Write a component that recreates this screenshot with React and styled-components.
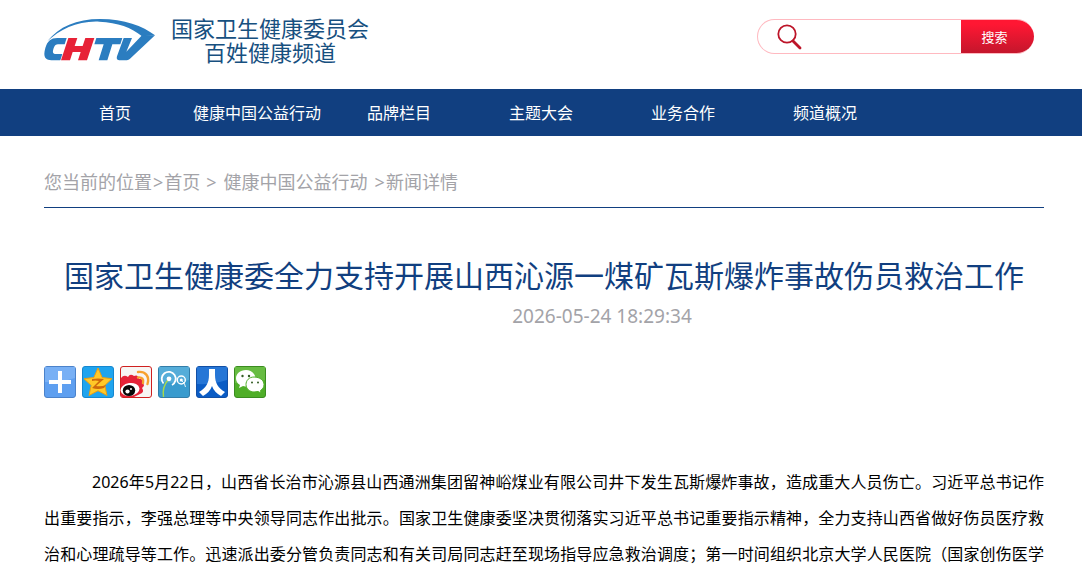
import React from "react";
import styled, { createGlobalStyle } from "styled-components";

const GlobalStyle = createGlobalStyle`
  body {
    margin: 0;
    background: #fff;
    color: #000;
    font-family: "Noto Sans", "Noto Sans CJK SC", sans-serif;
    font-size: 16px;
    text-spacing-trim: space-all;
  }

  a {
    color: inherit;
    text-decoration: none;
  }
`;

// Shared page gutters
const Wrap = styled.div`
  padding: 0 38px 0 44px;
`;

const Header = styled.header`
  display: flex;
  justify-content: space-between;
  align-items: flex-start;
  height: 73px;
  padding: 16px 48px 0 44px;
`;

const Brand = styled.a`
  display: flex;
  align-items: center;
  gap: 16px;
  color: #17507f;
`;

const BrandName = styled.span`
  display: flex;
  flex-direction: column;
  font-size: 22px;
  line-height: 24px;
  text-align: center;
`;

const SearchForm = styled.form`
  display: flex;
  align-items: center;
  box-sizing: border-box;
  width: 277px;
  height: 35px;
  margin-top: 3px;
  padding-left: 19px;
  border: 1px solid #ffb9c0;
  border-right: 0;
  border-radius: 18px;
  overflow: hidden;
`;

const SearchInput = styled.input`
  flex: 1;
  min-width: 0;
  height: 30px;
  padding: 0 8px;
  border: 0;
  outline: 0;
  background: transparent;
  font: inherit;
`;

const SearchButton = styled.button`
  width: 73px;
  height: 35px;
  padding: 0 6px 0 0;
  border: 0;
  background: linear-gradient(#ff1733 15%, #c2162c);
  color: #fff;
  font-family: inherit;
  font-size: 13px;
  cursor: pointer;
`;

const Nav = styled.nav`
  background: #113f80;
`;

const NavList = styled.ul`
  display: flex;
  margin: 0;
  padding: 1px 38px 0 44px;
  list-style: none;
`;

const NavItem = styled.li`
  width: 142px;
  color: #fff;
  line-height: 46px;
  text-align: center;
  white-space: nowrap;
`;

const Crumbs = styled.nav`
  display: flex;
  padding: 28px 0 7px;
  border-bottom: 1px solid #113f80;
  color: #a3a3a8;
  font-size: 18px;
  line-height: 36px;
`;

const Separator = styled.span`
  padding: 0 1px 0 ${(props) => (props.$wide ? 6 : 1)}px;
`;

const Title = styled.h1`
  margin: 48px 0 0;
  color: #113f80;
  font-size: 30px;
  font-weight: 400;
  line-height: 40px;
  text-align: center;
`;

const PublishTime = styled.time`
  display: block;
  padding-left: 116px;
  color: #a3a3a8;
  font-size: 19px;
  line-height: 40px;
  text-align: center;
`;

const ShareBar = styled.div`
  display: flex;
  gap: 6px;
  margin: 30px 0 66px;
`;

const ShareButton = styled.button`
  width: 32px;
  height: 32px;
  padding: 0;
  border: 0;
  background: none;
  cursor: pointer;

  svg {
    display: block;
  }
`;

const Paragraph = styled.p`
  margin: 0;
  line-height: 36px;
  text-align: justify;
  text-align-last: justify;
  text-indent: 48px;
`;

const LogoMark = () => (
  <svg width="111" height="44" viewBox="24 24 333 132" aria-hidden="true">
    <g fill="#2b7dc0">
      <path d="M34 94C68 50 122 27 192 27C266 27 320 48 357 76L318 79C286 52 246 38 190 35C126 32 72 58 34 94Z" />
      <path d="M92 84H64C44 84 34 94 28 114C21 138 26 151 46 151H73L79 132H61C51 132 49 128 52 118C55 107 59 103 69 103H86Z" />
      <path d="M181 84H259L253 103H229L214 151H188L203 103H175Z" />
      <path d="M263 84H288L271 125L318 76H357L282 146C278 150 274 151 268 151H253C243 151 241 147 243 139Z" />
    </g>
    <path fill="#e72237" d="M97 84H124L116 108H140L148 84H175L153 151H126L134 126H110L102 151H75Z" />
  </svg>
);

const SearchIcon = () => (
  <svg width="26" height="26" viewBox="0 0 26 26" fill="none" stroke="#bd1529" aria-hidden="true">
    <circle cx="10" cy="10" r="8.7" strokeWidth="1.8" />
    <path d="M16 17L23 24" strokeWidth="2.8" strokeLinecap="round" />
  </svg>
);

const Tile = ({ fill, stroke, children }) => (
  <svg width="32" height="32" viewBox="0 0 32 32" aria-hidden="true">
    <rect x=".5" y=".5" width="31" height="31" rx="2.5" fill={fill} stroke={stroke} />
    {children}
  </svg>
);

const shares = [
  {
    label: "分享",
    icon: (
      <Tile fill="#5e9ff0" stroke="#4b82ca">
        <path d="M1 1H31V12Q16 17 1 16Z" fill="#78b0f5" />
        <path d="M14 5h4v9h9v4h-9v9h-4v-9H5v-4h9Z" fill="#fff" />
      </Tile>
    ),
  },
  {
    label: "QQ空间",
    icon: (
      <Tile fill="#20a4ee" stroke="#1687cf">
        <path d="M16 2L20.2 11.5L30 12.7L22.8 19.4L25 29.5L16 24.7L7 29.5L9.2 19.4L2 12.7L11.8 11.5Z" fill="#ffc928" stroke="#ec9e13" />
        <path d="M10 13Q16 12 22 13L14 20Q19 21 24 19L22 22Q16 24 10 22L17 15Q13 14 10 15Z" fill="#cf690b" />
      </Tile>
    ),
  },
  {
    label: "新浪微博",
    icon: (
      <Tile fill="#f7f5f3" stroke="#cf2020">
        <path d="M1 12Q4 8 8 11Q10 7 14 10Q18 8 19 13Q23 12 22 17Q26 19 22 22Q25 26 20 28L14 31H2L1 30Z" fill="#e52338" />
        <ellipse cx="10" cy="23.5" rx="9.5" ry="6.5" fill="#fff" transform="rotate(-8 10 23.5)" />
        <ellipse cx="9" cy="24.5" rx="6.2" ry="5.5" fill="#080808" />
        <circle cx="7.5" cy="25.5" r="2.1" fill="#fff" />
        <circle cx="11" cy="23" r="1" fill="#fff" />
        <path d="M18 6C25 5 30 10 27.5 18M18 11.5C22 11 24 13 23 17" fill="none" stroke="#f7a12d" strokeWidth="2.4" strokeLinecap="round" />
      </Tile>
    ),
  },
  {
    label: "腾讯微博",
    icon: (
      <Tile fill="#399bce" stroke="#337da8">
        <path d="M1 1H31V14Q16 19 1 15Z" fill="#55add9" />
        <g fill="none" stroke="#fff">
          <path d="M5.5 17.5A7 7 0 1 1 14 19" strokeWidth="1.8" />
          <circle cx="23.3" cy="14" r="4" strokeWidth="1.4" />
          <path d="M24 15Q27 17 27.5 21" strokeWidth=".9" />
        </g>
        <path d="M10 14Q4 21 5.5 31" fill="none" stroke="#a9d94a" strokeWidth="1.4" />
        <circle cx="11" cy="12.8" r="2.4" fill="#fff" />
        <circle cx="23.3" cy="14" r="1.5" fill="#fff" />
      </Tile>
    ),
  },
  {
    label: "人人网",
    icon: (
      <Tile fill="#0a5cc5" stroke="#124fa5">
        <path d="M1 1H31V14Q16 19 1 18Z" fill="#2676d6" />
        <path d="M13 3H19V9C19 17 22 22 29 26L25 30Q18 26 16 20Q14 26 7 30L3 26C10 22 13 17 13 9Z" fill="#fff" />
      </Tile>
    ),
  },
  {
    label: "微信",
    icon: (
      <Tile fill="#4fae28" stroke="#3b8c20">
        <path d="M1 1H31V14Q16 19 1 17Z" fill="#67bc42" />
        <path d="M12 4C6 4 2 8 2 12.5C2 15 3.5 17.5 6 19L5 22L9 20Q17 22 20 17Q23 12 20 8Q17 4 12 4Z" fill="#fff" />
        <path d="M20 11C15 11 12 14.5 12 18.5C12 23 16 26 20 26L24 25.5L27 27L26.5 24.5C29 23 30 21 30 18.5C30 14.5 26 11 20 11Z" fill="#fff" stroke="#4fae28" />
        <g fill="#315b22">
          <circle cx="8.5" cy="10" r="1.2" />
          <circle cx="15" cy="10" r="1.2" />
          <circle cx="18" cy="16.5" r="1" />
          <circle cx="24" cy="16.5" r="1" />
        </g>
      </Tile>
    ),
  },
];

const navItems = ["首页", "健康中国公益行动", "品牌栏目", "主题大会", "业务合作", "频道概况"];

const App = () => {
  return (
    <>
      <GlobalStyle />
      <Header>
        <Brand href="#">
          <LogoMark />
          <BrandName>
            <span>国家卫生健康委员会</span>
            <span>百姓健康频道</span>
          </BrandName>
        </Brand>
        <SearchForm onSubmit={(e) => e.preventDefault()}>
          <SearchIcon />
          <SearchInput type="text" aria-label="搜索" />
          <SearchButton type="submit">搜索</SearchButton>
        </SearchForm>
      </Header>

      <Nav>
        <NavList>
          {navItems.map((item) => (
            <NavItem key={item}>
              <a href="#">{item}</a>
            </NavItem>
          ))}
        </NavList>
      </Nav>

      <Wrap>
        <Crumbs>
          <span>您当前的位置</span>
          <Separator>&gt;</Separator>
          <a href="#">首页</a>
          <Separator $wide>&gt;</Separator>
          <Separator as="a" href="#" $wide>健康中国公益行动</Separator>
          <Separator $wide>&gt;</Separator>
          <span>新闻详情</span>
        </Crumbs>

        <article>
          <Title>国家卫生健康委全力支持开展山西沁源一煤矿瓦斯爆炸事故伤员救治工作</Title>
          <PublishTime>2026-05-24 18:29:34</PublishTime>

          <ShareBar>
            {shares.map((share) => (
              <ShareButton key={share.label} type="button" aria-label={share.label}>
                {share.icon}
              </ShareButton>
            ))}
          </ShareBar>

          <Paragraph>
            2026年5月22日，山西省长治市沁源县山西通洲集团留神峪煤业有限公司井下发生瓦斯爆炸事故，造成重大人员伤亡。习近平总书记作出重要指示，李强总理等中央领导同志作出批示。国家卫生健康委坚决贯彻落实习近平总书记重要指示精神，全力支持山西省做好伤员医疗救治和心理疏导等工作。迅速派出委分管负责同志和有关司局同志赶至现场指导应急救治调度；第一时间组织北京大学人民医院（国家创伤医学
          </Paragraph>
        </article>
      </Wrap>
    </>
  );
};

export default App;
